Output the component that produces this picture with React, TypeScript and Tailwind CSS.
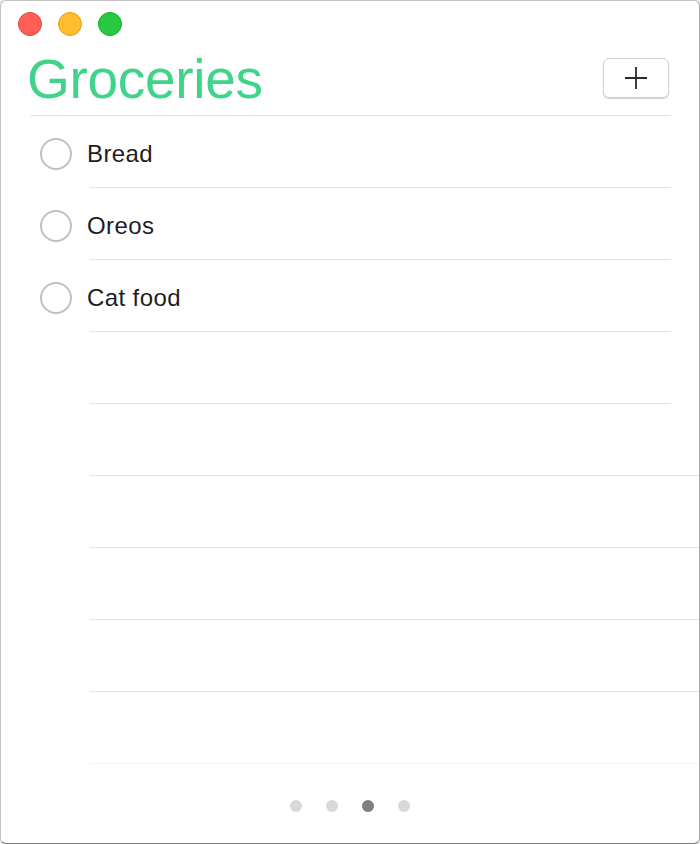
import React from 'react';

type Row = { label?: string; line: 'short' | 'long' | 'faint' };

const rows: Row[] = [
  { label: 'Bread', line: 'short' },
  { label: 'Oreos', line: 'short' },
  { label: 'Cat food', line: 'short' },
  { line: 'short' },
  { line: 'long' },
  { line: 'long' },
  { line: 'long' },
  { line: 'long' },
  { line: 'faint' },
];

const font = { fontFamily: '"Helvetica Neue", "Liberation Sans", Arial, sans-serif' };

const App = () => {
  return (
    <div className="w-[700px] h-[844px] bg-[#ececec]" style={font}>
      <div className="w-full h-full flex flex-col bg-white rounded-[6px] border border-[#c2c2c2] border-r-[#a9a9a9] border-b-[#7c7c7c] overflow-hidden">
        {/* Traffic lights */}
        <div className="flex items-center gap-[16px] pl-[17px] pt-[11px] h-[35px] shrink-0">
          <span className="w-[24px] h-[24px] rounded-full bg-[#ff5f57] border border-[#e2463f]" />
          <span className="w-[24px] h-[24px] rounded-full bg-[#ffbd2e] border border-[#e1a116]" />
          <span className="w-[24px] h-[24px] rounded-full bg-[#28c940] border border-[#14ae2c]" />
        </div>

        {/* Header */}
        <div className="flex items-center justify-between h-[79px] pt-[4px] pl-[26px] pr-[30px] shrink-0">
          <h1 className="text-[55px] leading-none text-[#40d48b] tracking-[-0.3px] mt-[4px]">Groceries</h1>
          <button className="w-[66px] h-[40px] rounded-[6px] border border-[#d2d2d2] bg-white shadow-[0_1px_1px_rgba(0,0,0,0.18)] flex items-center justify-center">
            <svg width="22" height="22" viewBox="0 0 22 22" fill="none" stroke="#2b2b2b" strokeWidth="1.8">
              <line x1="11" y1="0" x2="11" y2="22" />
              <line x1="0" y1="11" x2="22" y2="11" />
            </svg>
          </button>
        </div>
        <div className="ml-[29px] mr-[28px] h-px bg-[#e4e4e4] shrink-0" />

        {/* List */}
        <div className="flex flex-col shrink-0">
          {rows.map((row, i) => (
            <div key={i} className="flex flex-col h-[72px]">
              <div className="flex-1 flex items-center pt-[4px] pl-[39px] gap-[15px]">
                {row.label && (
                  <>
                    <span className="w-[32px] h-[32px] rounded-full border-2 border-[#c0c0c0]" />
                    <span className="text-[24px] leading-none text-[#1e1e1e] tracking-[0.4px]">{row.label}</span>
                  </>
                )}
              </div>
              <div
                className={
                  row.line === 'short'
                    ? 'ml-[89px] mr-[28px] h-px bg-[#e4e4e4]'
                    : row.line === 'long'
                    ? 'ml-[89px] h-px bg-[#e4e4e4]'
                    : 'ml-[89px] h-px bg-[#f4f4f4]'
                }
              />
            </div>
          ))}
        </div>

        {/* Page dots */}
        <div className="flex justify-center gap-[24px] mt-[36px]">
          <span className="w-[12px] h-[12px] rounded-full bg-[#d9d9d9]" />
          <span className="w-[12px] h-[12px] rounded-full bg-[#d9d9d9]" />
          <span className="w-[12px] h-[12px] rounded-full bg-[#7f7f7f]" />
          <span className="w-[12px] h-[12px] rounded-full bg-[#d9d9d9]" />
        </div>
      </div>
    </div>
  );
};

export default App;
